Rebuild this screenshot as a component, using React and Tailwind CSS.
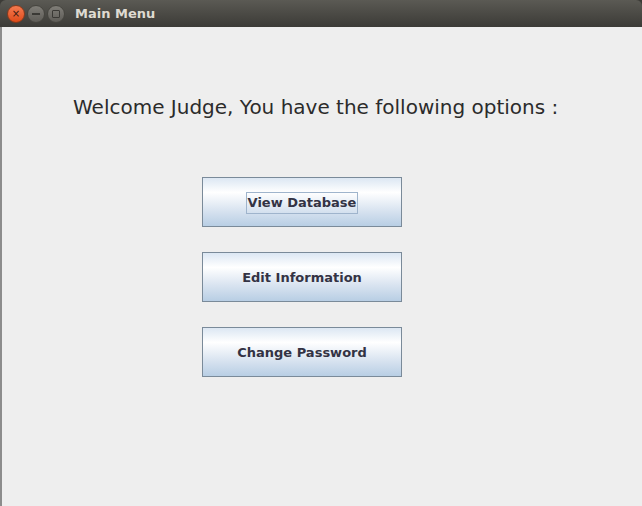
import React from 'react';

const buttons = ['View Database', 'Edit Information', 'Change Password'];

export default function App() {
  return (
    <div className="w-[642px] h-[506px] flex flex-col bg-[#3c3b37] overflow-hidden" style={{ fontFamily: '"DejaVu Sans", sans-serif' }}>
      {/* title bar */}
      <div className="h-[27px] shrink-0 flex items-center rounded-t-[6px] bg-gradient-to-b from-[#5b5a54] to-[#3c3b37]">
        <div className="flex items-center gap-[2px] pl-[7px]">
          <span className="w-[18px] h-[18px] rounded-full bg-gradient-to-b from-[#f47a4f] to-[#df4a16] border border-[#8a3a1c] flex items-center justify-center text-[#3a1a10] text-[10px] leading-none">×</span>
          <span className="w-[18px] h-[18px] rounded-full bg-gradient-to-b from-[#807e78] to-[#5e5c57] border border-[#46453f] flex items-center justify-center">
            <span className="w-[8px] h-[2px] bg-[#3a3935]" />
          </span>
          <span className="w-[18px] h-[18px] rounded-full bg-gradient-to-b from-[#807e78] to-[#5e5c57] border border-[#46453f] flex items-center justify-center">
            <span className="w-[8px] h-[8px] border border-[#3a3935] rounded-[1px]" />
          </span>
        </div>
        <span className="ml-[10px] text-[13px] font-bold text-[#dfdbd2]">Main Menu</span>
      </div>

      {/* content */}
      <div className="flex-1 flex bg-[#eeeeee]">
        <div className="w-[2px] bg-[#8c8c8c]" />
        <div className="flex-1 flex flex-col">
          <p className="mt-[67px] ml-[71px] text-[20px] text-[#2b2b2b] leading-[26px]">
            Welcome Judge, You have the following options :
          </p>
          <div className="mt-[57px] ml-[200px] flex flex-col gap-[25px]">
            {buttons.map((b, i) => (
              <div
                key={b}
                className="w-[200px] h-[50px] pt-[2px] border border-[#7a8a99] flex items-center justify-center bg-[linear-gradient(to_bottom,#dce7f3_0%,#ffffff_30%,#dbe5f1_65%,#b8cee4_100%)]"
              >
                <span className={`text-[13px] font-bold text-[#333344] px-[1px] ${i === 0 ? 'outline outline-1 outline-[#9fb4cc]' : ''}`}>
                  {b}
                </span>
              </div>
            ))}
          </div>
        </div>
      </div>
    </div>
  );
}
